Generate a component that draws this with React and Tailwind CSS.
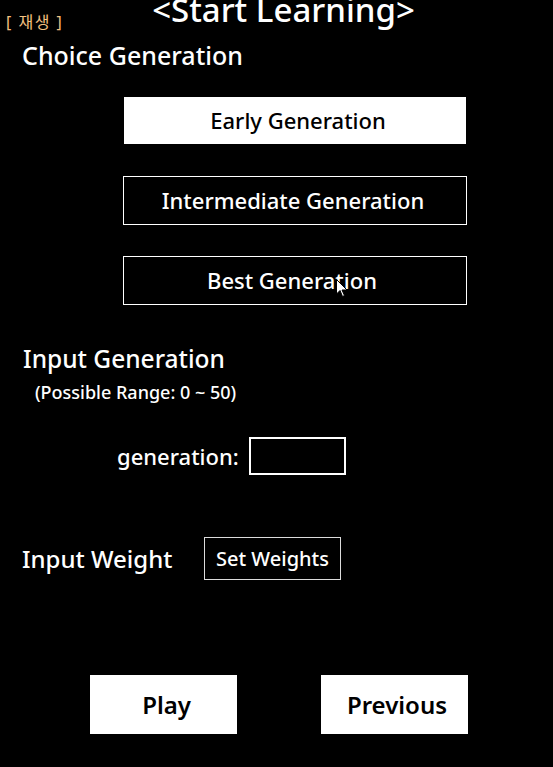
export default function App() {
    const font = { fontFamily: '"Noto Sans", "Noto Sans CJK KR", sans-serif' };

    return (
        <div style={font} className="relative w-[553px] h-[767px] overflow-hidden bg-black text-white">
            {/* recording label */}
            <span className="absolute left-[6px] top-[10px] text-[16px] leading-[24px] tracking-[1.5px] text-[#f5c080]">
                [ 재생 ]
            </span>

            <h1 className="-mt-[8px] pl-[14px] text-center text-[33px] leading-[36px] font-medium">
                &lt;Start Learning&gt;
            </h1>

            <h2 className="mt-[13px] pl-[22px] text-[25px] leading-[28px] font-medium">
                Choice Generation
            </h2>

            <div className="ml-[123px] mt-[28px] flex w-[344px] flex-col">
                <button className="ml-[1px] h-[47px] w-[342px] bg-white pl-[6px] text-[22px] font-medium text-black">
                    Early Generation
                </button>
                <button className="mt-[32px] h-[49px] w-[344px] border border-white pr-[4px] text-[22px] font-medium">
                    Intermediate Generation
                </button>
                <button className="mt-[31px] h-[49px] w-[344px] border border-white pr-[6px] text-[22px] font-medium">
                    Best Generation
                </button>
            </div>

            <h2 className="mt-[40px] pl-[23px] text-[24.5px] leading-[28px] font-medium">
                Input Generation
            </h2>
            <p className="mt-[9px] pl-[35px] text-[18px] leading-[20px] font-medium">
                (Possible Range: 0 ~ 50)
            </p>

            <div className="ml-[117px] mt-[35px] flex items-center gap-[11px]">
                <span className="w-[121px] whitespace-nowrap text-[22px] font-medium">generation:</span>
                <div className="h-[38px] w-[97px] border-2 border-white" />
            </div>

            <div className="ml-[22px] mt-[62px] flex items-center gap-[30px]">
                <span className="w-[152px] whitespace-nowrap text-[24px] font-medium">Input Weight</span>
                <button className="h-[43px] w-[137px] border border-[#dcdcdc] text-[20px] font-medium">
                    Set Weights
                </button>
            </div>

            <div className="ml-[90px] mt-[95px] flex gap-[84px]">
                <button className="h-[59px] w-[147px] bg-white pl-[6px] text-[24px] font-semibold text-black">
                    Play
                </button>
                <button className="h-[59px] w-[147px] bg-white pl-[5px] text-[24px] font-semibold text-black">
                    Previous
                </button>
            </div>

            {/* mouse pointer */}
            <svg className="absolute left-[336px] top-[279px]" width="12" height="19" viewBox="0 0 12 19">
                <path d="M0.5 0.5 L0.5 15 L4 11.5 L6.5 17.5 L8.5 16.5 L6 11 L11 11 Z" fill="#fff" stroke="#000" strokeWidth="1" />
            </svg>
        </div>
    );
}
